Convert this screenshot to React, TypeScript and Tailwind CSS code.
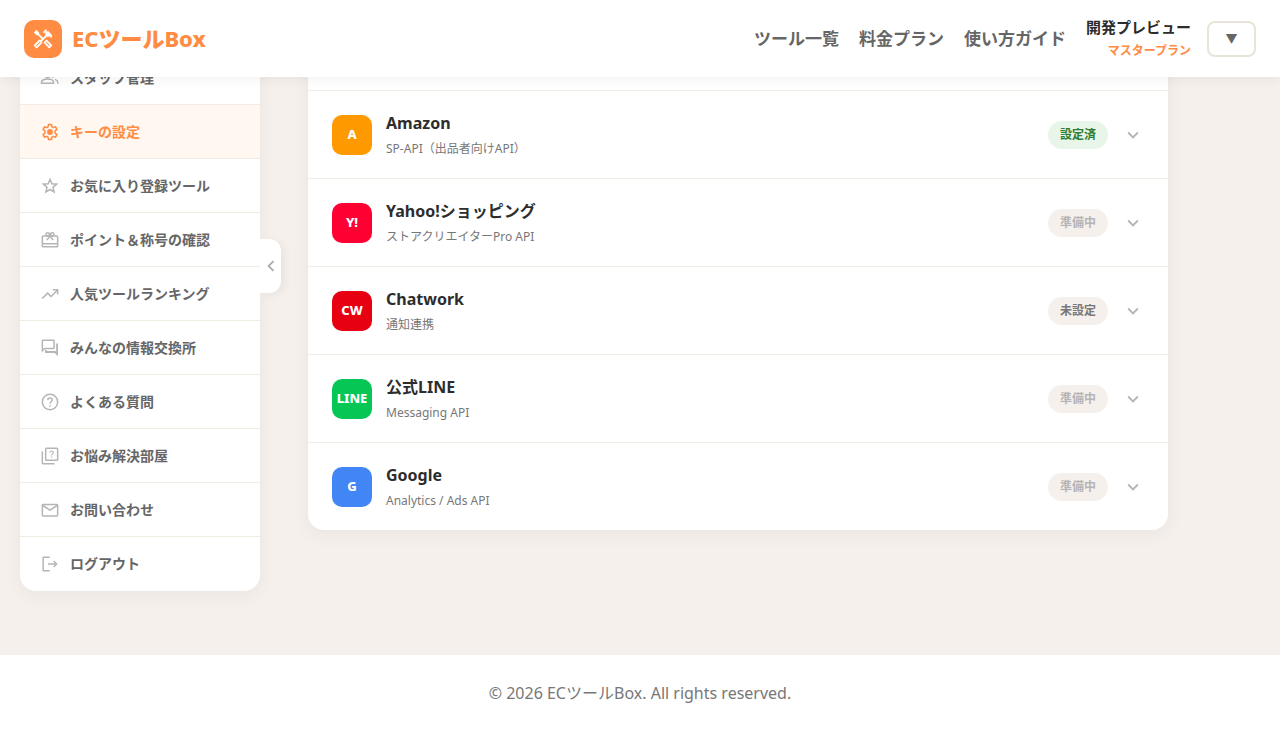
import React from "react";
import { MdChevronLeft, MdExpandMore, MdOutlineHandyman } from "react-icons/md";

interface IconProps {
  className?: string;
}

interface MenuItem {
  label: string;
  icon: React.FC<IconProps>;
  isActive?: boolean;
}

type ServiceStatus = "done" | "preparing" | "unset";

interface Service {
  name: string;
  description: string;
  mark: string;
  markClass: string;
  status: ServiceStatus;
}

// Thin outline icons for the side menu, all on a 24 unit grid
const MenuIcon: React.FC<IconProps & { children: React.ReactNode }> = ({
  className,
  children,
}) => (
  <svg
    viewBox="0 0 24 24"
    className={className}
    fill="none"
    stroke="currentColor"
    strokeWidth="1.8"
    aria-hidden="true"
  >
    {children}
  </svg>
);

const PeopleIcon: React.FC<IconProps> = ({ className }) => (
  <MenuIcon className={className}>
    <circle cx="9" cy="8" r="3.2" />
    <path d="M1.8 18.2v-1.4c0-2.3 4-3.6 7.2-3.6s7.2 1.3 7.2 3.6v1.4z" />
    <path d="M14.5 4.9a3.2 3.2 0 0 1 0 6.2M18 13.6c1.9.7 3.3 1.8 3.3 3.2v2.2" />
  </MenuIcon>
);

const GearIcon: React.FC<IconProps> = ({ className }) => (
  <MenuIcon className={className}>
    <path
      strokeLinejoin="round"
      d="M10.2 3h3.6l.5 2.9 1.5.9 2.7-1.1 1.8 3.1-2.2 1.8v2.8l2.2 1.8-1.8 3.1-2.7-1.1-1.5.9-.5 2.9h-3.6l-.5-2.9-1.5-.9-2.7 1.1-1.8-3.1 2.2-1.8v-2.8L3.7 8.8l1.8-3.1 2.7 1.1 1.5-.9z"
    />
    <circle cx="12" cy="12" r="3.5" fill="currentColor" stroke="none" />
  </MenuIcon>
);

const StarIcon: React.FC<IconProps> = ({ className }) => (
  <MenuIcon className={className}>
    <path d="M12 4l2.2 5.3 5.8.5-4.4 3.8 1.3 5.6-4.9-3-4.9 3 1.3-5.6L4 9.8l5.8-.5z" />
  </MenuIcon>
);

const GiftIcon: React.FC<IconProps> = ({ className }) => (
  <MenuIcon className={className}>
    <rect x="2.8" y="7.2" width="18.4" height="13" rx="1" />
    <path d="M2.8 16.5h18.4M12 7.2l-3.8 5M12 7.2l3.8 5" />
    <circle cx="9.3" cy="5.2" r="2" />
    <circle cx="14.7" cy="5.2" r="2" />
  </MenuIcon>
);

const TrendIcon: React.FC<IconProps> = ({ className }) => (
  <MenuIcon className={className}>
    <path d="M2.7 17.5l6.5-6.5 4 4 7.6-7.6M15.5 6.8h5.7v5.7" />
  </MenuIcon>
);

const ForumIcon: React.FC<IconProps> = ({ className }) => (
  <MenuIcon className={className}>
    <path d="M2.8 15.2V3.5c0-.4.3-.7.7-.7h12.7c.4 0 .7.3.7.7v8.3c0 .4-.3.7-.7.7H5.5z" />
    <path strokeWidth="2.2" d="M20.5 6.5v12.6l-2.3-2.3H7.2v-2.3" />
  </MenuIcon>
);

const HelpIcon: React.FC<IconProps> = ({ className }) => (
  <MenuIcon className={className}>
    <circle cx="12" cy="12" r="9.2" />
    <path d="M9.3 9.7c.1-1.6 1.2-2.5 2.7-2.5s2.7 1 2.7 2.4c0 2-2.7 2.2-2.7 4.6M12 16v1.8" />
  </MenuIcon>
);

const QuizIcon: React.FC<IconProps> = ({ className }) => (
  <MenuIcon className={className}>
    <rect x="6.8" y="2.8" width="14.4" height="14.4" rx="1" />
    <path d="M2.8 6.5v14c0 .4.3.7.7.7h14" />
    <path
      strokeWidth="1.4"
      d="M12 7.9c.1-1.2.9-1.9 2-1.9s2 .7 2 1.8c0 1.5-2 1.7-2 3.5M14 12.6V14"
    />
  </MenuIcon>
);

const MailIcon: React.FC<IconProps> = ({ className }) => (
  <MenuIcon className={className}>
    <rect x="2.8" y="5.3" width="18.4" height="13.8" rx="1" />
    <path d="M3 6.3l9 5.9 9-5.9" />
  </MenuIcon>
);

const LogoutIcon: React.FC<IconProps> = ({ className }) => (
  <MenuIcon className={className}>
    <path d="M11.8 3.8H4.5c-.4 0-.7.3-.7.7v15c0 .4.3.7.7.7h7.3M9.5 12h10M16.3 8.3L20 12l-3.7 3.7" />
  </MenuIcon>
);

const menuItems: MenuItem[] = [
  { label: "スタッフ管理", icon: PeopleIcon },
  { label: "キーの設定", icon: GearIcon, isActive: true },
  { label: "お気に入り登録ツール", icon: StarIcon },
  { label: "ポイント＆称号の確認", icon: GiftIcon },
  { label: "人気ツールランキング", icon: TrendIcon },
  { label: "みんなの情報交換所", icon: ForumIcon },
  { label: "よくある質問", icon: HelpIcon },
  { label: "お悩み解決部屋", icon: QuizIcon },
  { label: "お問い合わせ", icon: MailIcon },
  { label: "ログアウト", icon: LogoutIcon },
];

const services: Service[] = [
  {
    name: "Amazon",
    description: "SP-API（出品者向けAPI）",
    mark: "A",
    markClass: "bg-[#ff9900]",
    status: "done",
  },
  {
    name: "Yahoo!ショッピング",
    description: "ストアクリエイターPro API",
    mark: "Y!",
    markClass: "bg-[#ff0033]",
    status: "preparing",
  },
  {
    name: "Chatwork",
    description: "通知連携",
    mark: "CW",
    markClass: "bg-[#e60012]",
    status: "unset",
  },
  {
    name: "公式LINE",
    description: "Messaging API",
    mark: "LINE",
    markClass: "bg-[#06c755]",
    status: "preparing",
  },
  {
    name: "Google",
    description: "Analytics / Ads API",
    mark: "G",
    markClass: "bg-[#4285f4]",
    status: "preparing",
  },
];

const statusBadges: Record<ServiceStatus, { text: string; className: string }> = {
  done: { text: "設定済", className: "bg-[#e8f5e9] text-[#2e7d32]" },
  preparing: { text: "準備中", className: "bg-[#f5f0ec] text-[#b5b5b5]" },
  unset: { text: "未設定", className: "bg-[#f5f0ec] text-[#777777]" },
};

const Header: React.FC = () => (
  <header className="sticky top-0 z-10 flex h-[77px] items-center justify-between bg-white px-6 shadow-[0_2px_12px_rgba(0,0,0,0.06)]">
    <a href="#" className="flex items-center gap-[10px] text-[#ff8c42]">
      <span className="grid size-[38px] place-items-center rounded-[10px] bg-[#ff8c42] text-white">
        <MdOutlineHandyman className="size-[22px]" />
      </span>
      <span className="text-[22px] font-extrabold">ECツールBox</span>
    </a>
    <div className="flex items-center gap-5">
      <nav className="flex items-center gap-5 text-[17px] font-bold text-[#666666]">
        <a href="#">ツール一覧</a>
        <a href="#">料金プラン</a>
        <a href="#">使い方ガイド</a>
      </nav>
      <div className="flex items-center gap-4">
        <div className="text-right font-bold">
          <p className="text-[15px] leading-6 text-[#2d2d2d]">開発プレビュー</p>
          <p className="text-xs leading-6 text-[#ff8c42]">マスタープラン</p>
        </div>
        <button
          type="button"
          aria-label="アカウントメニュー"
          className="h-9 w-[49px] rounded-lg border-2 border-[#e8e4d9] bg-white text-xs leading-none text-[#666666]"
        >
          ▼
        </button>
      </div>
    </div>
  </header>
);

const Sidebar: React.FC = () => (
  <aside className="relative w-60 shrink-0 self-start">
    <nav className="overflow-hidden rounded-2xl bg-white shadow-[0_4px_20px_rgba(0,0,0,0.05)]">
      {menuItems.map(({ label, icon: Icon, isActive }) => (
        <a
          key={label}
          href="#"
          className={`flex h-[54px] items-center gap-[10px] border-b border-[#f0ebe3] px-5 text-sm font-bold last:border-b-0 ${
            isActive ? "bg-[#fff7f0] text-[#ff8c42]" : "text-[#666666]"
          }`}
        >
          <Icon className={`size-5 ${isActive ? "text-[#ff8c42]" : "text-[#b5b5b5]"}`} />
          <span>{label}</span>
        </a>
      ))}
    </nav>
    {/* Collapse handle, sticks out of the right edge */}
    <button
      type="button"
      aria-label="メニューを閉じる"
      className="absolute top-[188px] left-full grid h-[54px] w-[21px] place-items-center rounded-r-xl bg-white text-[#aaaaaa] shadow-[4px_2px_8px_rgba(0,0,0,0.05)]"
    >
      <MdChevronLeft className="size-[22px]" />
    </button>
  </aside>
);

const ServiceRow: React.FC<{ service: Service }> = ({ service }) => {
  const badge = statusBadges[service.status];

  return (
    <button
      type="button"
      className="flex h-[88px] w-full items-center gap-[14px] border-t border-[#f0ebe3] px-6 text-left"
    >
      <span
        className={`grid size-10 shrink-0 place-items-center rounded-[10px] text-[13px] font-extrabold text-white ${service.markClass}`}
      >
        {service.mark}
      </span>
      <span className="flex-1">
        <span className="block text-base leading-7 font-bold text-[#2d2d2d]">{service.name}</span>
        <span className="block text-xs leading-6 text-[#777777]">{service.description}</span>
      </span>
      <span className={`rounded-full px-3 py-1 text-xs leading-5 font-bold ${badge.className}`}>
        {badge.text}
      </span>
      <MdExpandMore className="size-[22px] text-[#b5b5b5]" />
    </button>
  );
};

export default function App() {
  return (
    <div className="min-h-screen bg-white font-['Noto_Sans','Noto_Sans_CJK_JP',sans-serif]">
      <Header />
      <div className="bg-[#f5f0ec]">
        {/* The panels run up underneath the sticky header */}
        <div className="-mt-[26px] flex gap-12 px-5 pb-16">
          <Sidebar />
          <main className="w-full max-w-[860px] self-start overflow-hidden rounded-2xl bg-white pt-[39px] shadow-[0_4px_20px_rgba(0,0,0,0.05)]">
            {services.map((service) => (
              <ServiceRow key={service.name} service={service} />
            ))}
          </main>
        </div>
      </div>
      <footer className="bg-white py-6 text-center text-base leading-7 text-[#777777]">
        © 2026 ECツールBox. All rights reserved.
      </footer>
    </div>
  );
}
